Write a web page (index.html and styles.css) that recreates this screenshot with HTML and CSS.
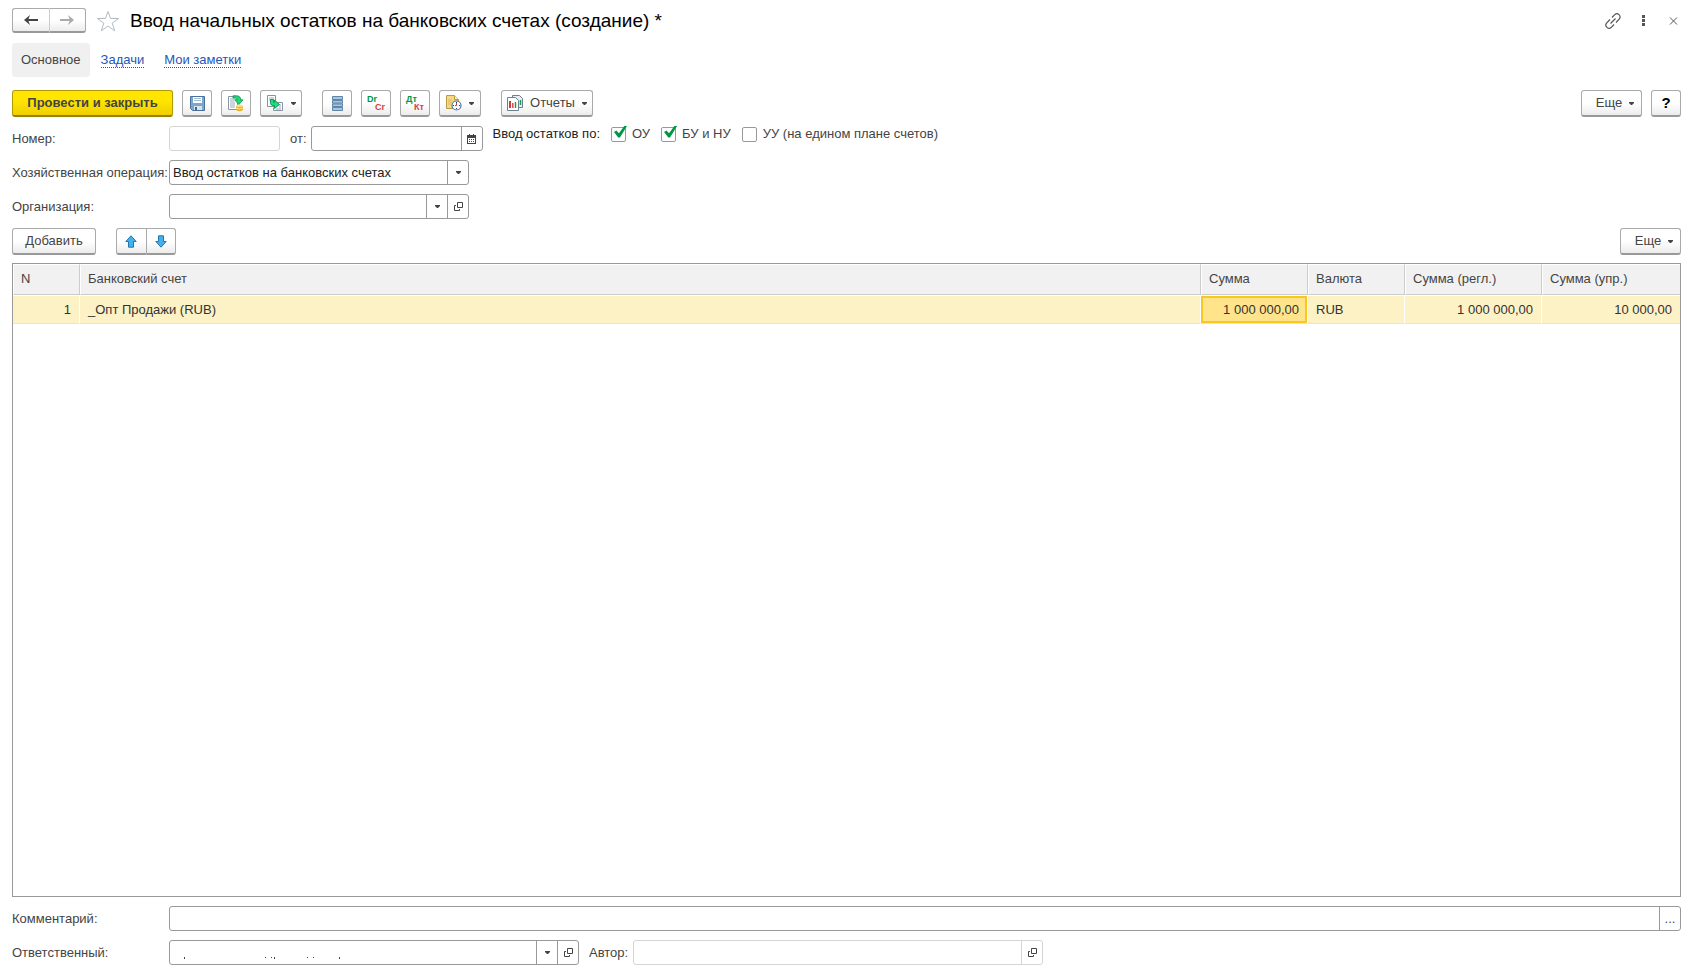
FILE: index.html
```html
<!DOCTYPE html>
<html lang="ru">
<head>
<meta charset="utf-8">
<title>Ввод начальных остатков на банковских счетах (создание) *</title>
<link rel="stylesheet" href="styles.css">
</head>
<body>
<svg class="defs" aria-hidden="true">
  <symbol id="open" viewBox="0 0 9 9"><path d="M3.5.5h5v5h-5zM2 3.500H.5v5h5V7" fill="none" stroke="#444"/></symbol>
  <symbol id="caret" viewBox="0 0 5 3"><path d="M0 0h5v1L3 3H2L0 1z" fill="#444"/></symbol>
</svg>
<div class="page">
  <header class="titlebar">
    <div class="group nav">
      <button class="btn" aria-label="Назад"><svg width="14" height="10" viewBox="0 0 14 10"><path d="M6 0L4.500 4H14v2H4.500L6 10 0 5z" fill="#444"/></svg></button>
      <button class="btn" aria-label="Вперед"><svg width="14" height="10" viewBox="0 0 14 10"><path d="M8 0l1.500 4H0v2h9.500L8 10l6-5z" fill="#aaa"/></svg></button>
    </div>
    <button class="plain star" aria-label="В избранное"><svg width="24" height="22" viewBox="0 0 24 22"><path d="M12 1.500l2.600 7h8l-6.400 4.600 2.500 7.700L12 16l-6.700 4.800 2.500-7.700L1.400 8.500h8z" fill="#fff" stroke="#b4bac2"/></svg></button>
    <h1>Ввод начальных остатков на банковских счетах (создание) *</h1>
    <div class="window-tools">
      <button class="plain" aria-label="Ссылка"><svg width="16" height="16" viewBox="0 0 16 16" fill="none" stroke="#555" stroke-width="1.200"><path d="M7 4.500l2.500-2.700a3 3 0 0 1 4.700 4.400L11 9.500M9 11.500l-2.500 2.700a3 3 0 0 1-4.700-4.400L5 6.500M5.500 10.500l5-5" /></svg></button>
      <button class="plain" aria-label="Меню"><svg width="16" height="11" viewBox="0 0 16 11" fill="#555"><path d="M7 0h3v3H7zM7 4h3v3H7zM7 8h3v3H7z"/></svg></button>
      <button class="plain" aria-label="Закрыть"><svg width="16" height="8" viewBox="0 0 16 8"><path d="M5 .5l7 7M12 .5l-7 7" stroke="#555"/></svg></button>
    </div>
  </header>

  <nav class="tabs">
    <a class="tab current" href="#main">Основное</a>
    <a class="tab" href="#tasks"><span>Задачи</span></a>
    <a class="tab" href="#notes"><span>Мои заметки</span></a>
  </nav>

  <div class="toolbar">
    <button class="btn primary">Провести и закрыть</button>
    <button class="btn icon" aria-label="Записать"><svg width="15" height="15" viewBox="0 0 15 15"><path d="M.5.5h14v14h-12l-2-2z" fill="#7ba6d0" stroke="#4a719b"/><path d="M3 1h9v6H3z" fill="#fff"/><path d="M4 2.500h7M4 4.500h7" stroke="#a9bfd4"/><path d="M4 10h8v4H4z" fill="#dde3e9"/><path d="M5 11h2v3H5z" fill="#3f668f"/></svg></button>
    <button class="btn icon" aria-label="Провести"><svg width="16" height="17" viewBox="0 0 16 17"><path d="M.5 1.500h9v13h-9z" fill="#fff" stroke="#8494a4"/><path d="M2 4h4M2 6h4M2 8h5M2 10h5M2 12h5" stroke="#9aa9b8"/><path d="M5 .8h3.500q4.200 0 4.200 4H15L11 9.500 6.500 4.800h2.700q0-1.700-1.700-1.700H5z" fill="#1fd976" stroke="#08904b" stroke-width=".8"/><path d="M8 11v4q3.500 2.500 7 0v-4z" fill="#e9ae22"/><ellipse cx="11.500" cy="11" rx="3.500" ry="1.200" fill="#ffdf6b"/><path d="M8 13q3.500 2 7 0" stroke="#ffe9a0" fill="none"/></svg></button>
    <button class="btn icon menu" aria-label="Создать на основании"><svg width="17" height="16" viewBox="0 0 17 16"><path d="M.5.500h8v11h-8zM9.500 7.500h6v8h-9v-3" fill="#fff" stroke="#8494a4"/><path d="M2 3h5M2 5h2M12 10h2M12 12h2M9 14h5" stroke="#9aa9b8"/><path d="M3.500 4.500v3.700q0 2.300 2.500 2.300h1.500v3L12.500 9.500 7.500 5v2.500H6.500V4.500z" fill="#22dd7c" stroke="#0a944f" stroke-width=".9"/></svg><svg class="caret"><use href="#caret"/></svg></button>
    <button class="btn icon gap" aria-label="Реестр"><svg width="11" height="15" viewBox="0 0 11 15"><rect width="11" height="15" rx="1" fill="#aecbe4"/><path d="M.5.500h10v3H.5zM.5 4.500h10v2.500H.5zM.5 8h10v2.500H.5zM.5 11.500h10v3H.5z" fill="#a6c6e2" stroke="#6286a6"/></svg></button>
    <button class="btn icon letters" aria-label="Dr Cr"><span class="debit">Dr</span><span class="credit">Cr</span></button>
    <button class="btn icon letters" aria-label="Дт Кт"><span class="debit">Дт</span><span class="credit">Кт</span></button>
    <button class="btn icon menu" aria-label="История"><svg width="16" height="16" viewBox="0 0 16 16"><path d="M.5.500h8l4 4v9H.5z" fill="#f6d980" stroke="#b99a45"/><path d="M8.500.500v4h4" fill="#fff3c6" stroke="#b99a45"/><path d="M2 5h4M2 7h4M2 9h3" stroke="#dcbc66"/><circle cx="10.500" cy="10.500" r="4.500" fill="#fff" stroke="#4775a8" stroke-width="1.200"/><path d="M10.500 7v1M10.500 13v1M7 10.500h1M13 10.500h1" stroke="#24466d"/><path d="M10.500 8v2.500H9" fill="none" stroke="#d13d3d"/></svg><svg class="caret"><use href="#caret"/></svg></button>
    <button class="btn reports gap"><svg width="16" height="16" viewBox="0 0 16 16"><path d="M5.500.500h7l3 3v9h-10z" fill="#e9edf1" stroke="#6f7f8f"/><path d="M.5 2.500h8l3 3v10H.5z" fill="#fff" stroke="#6f7f8f"/><path d="M3 6v7" stroke="#d33c32" stroke-width="2"/><path d="M5.800 8v5" stroke="#e0483c" stroke-width="1.500"/><path d="M8.500 7v6M13.500 5v5" stroke="#209c55" stroke-width="1.500"/></svg>Отчеты<svg class="caret"><use href="#caret"/></svg></button>
    <button class="btn more push">Еще<svg class="caret"><use href="#caret"/></svg></button>
    <button class="btn icon help" aria-label="Справка">?</button>
  </div>

  <form class="fields">
    <div class="row">
      <label class="label" for="number">Номер:</label>
      <div class="field readonly number"><input id="number" readonly></div>
      <label class="from" for="date">от:</label>
      <div class="field date"><input id="date"><button type="button" aria-label="Календарь"><svg width="9" height="10" viewBox="0 0 9 10"><path d="M0 1h9v9H0z" fill="#444"/><path d="M2.500 0v2M6.500 0v2" stroke="#444"/><path d="M1 4h7v5H1z" fill="#fff"/><path d="M2 5.500h5M2 7.500h5" stroke="#444" stroke-dasharray="1 1"/></svg></button></div>
      <div class="checks" role="group" aria-labelledby="checks-caption">
        <span id="checks-caption">Ввод остатков по:</span>
        <label><input type="checkbox" checked>ОУ</label>
        <label><input type="checkbox" checked>БУ и НУ</label>
        <label><input type="checkbox">УУ (на едином плане счетов)</label>
      </div>
    </div>
    <div class="row">
      <label class="label" for="operation">Хозяйственная операция:</label>
      <div class="field medium"><select id="operation"><option>Ввод остатков на банковских счетах</option></select><span class="arrow"><svg class="caret"><use href="#caret"/></svg></span></div>
    </div>
    <div class="row">
      <label class="label" for="org">Организация:</label>
      <div class="field medium"><input id="org"><button type="button" aria-label="Выбрать"><svg class="caret"><use href="#caret"/></svg></button><button type="button" aria-label="Открыть"><svg width="9" height="9"><use href="#open"/></svg></button></div>
    </div>
  </form>

  <div class="toolbar list-tools">
    <button class="btn add">Добавить</button>
    <div class="group move">
      <button class="btn" aria-label="Вверх"><svg width="12" height="13" viewBox="0 0 12 13"><path d="M6 .8l5.200 5.700H8.500v5.700h-5V6.500H.8z" fill="#41b1f0" stroke="#2677a8"/></svg></button>
      <button class="btn" aria-label="Вниз"><svg width="12" height="13" viewBox="0 0 12 13"><path d="M6 12.200L.8 6.500h2.700V.8h5v5.700h2.700z" fill="#41b1f0" stroke="#2677a8"/></svg></button>
    </div>
    <button class="btn more push">Еще<svg class="caret"><use href="#caret"/></svg></button>
  </div>

  <div class="grid">
    <table>
      <colgroup><col class="c-n"><col><col class="c-sum"><col class="c-cur"><col class="c-reg"><col class="c-man"></colgroup>
      <thead><tr><th>N</th><th>Банковский счет</th><th>Сумма</th><th>Валюта</th><th>Сумма (регл.)</th><th>Сумма (упр.)</th></tr></thead>
      <tbody><tr><td class="num">1</td><td>_Опт Продажи (RUB)</td><td class="num active">1 000 000,00</td><td>RUB</td><td class="num">1 000 000,00</td><td class="num">10 000,00</td></tr></tbody>
    </table>
  </div>

  <footer class="fields bottom">
    <div class="row">
      <label class="label" for="comment">Комментарий:</label>
      <div class="field wide"><input id="comment"><button type="button" aria-label="Редактировать">...</button></div>
    </div>
    <div class="row">
      <label class="label" for="responsible">Ответственный:</label>
      <div class="field responsible"><input id="responsible"><svg class="traces" width="160" height="3" viewBox="0 0 160 3" fill="#444"><path d="M0 0h1v2H0zM81 0h1v1h-1zM87 0h1v1h-1zM90 0h1v2h-1zM123 0h1v1h-1zM129 0h1v1h-1zM155 0h1v2h-1z"/></svg><button type="button" aria-label="Выбрать"><svg class="caret"><use href="#caret"/></svg></button><button type="button" aria-label="Открыть"><svg width="9" height="9"><use href="#open"/></svg></button></div>
      <label class="author-label" for="author">Автор:</label>
      <div class="field readonly author"><input id="author" readonly><button type="button" aria-label="Открыть"><svg width="9" height="9"><use href="#open"/></svg></button></div>
    </div>
  </footer>
</div>
</body>
</html>
```
FILE: styles.css
```css
* { box-sizing: border-box; }
body { margin: 0; background: #fff; }
body, button, input, select { font: 13px/16px "Liberation Sans", Arial, sans-serif; color: #444; }
svg { display: block; flex: none; }
.defs { position: absolute; width: 0; height: 0; }
.page { display: flex; flex-direction: column; min-height: 100vh; padding: 8px 12px 10px; }

.btn {
  display: flex; align-items: center; justify-content: center;
  height: 27px; padding: 0 12px; border: 1px solid #aaa; border-bottom: 2px solid #999; border-radius: 3px;
  background: linear-gradient(#fff 50%, #ececec);
}
.plain { display: flex; padding: 0; border: 0; background: none; }
.caret { width: 5px; height: 3px; }
.group { display: flex; }
.group .btn { flex: 1; padding: 0; }
.group .btn:first-child { border-radius: 3px 0 0 3px; }
.group .btn:last-child { border-left: 0; border-radius: 0 3px 3px 0; }

.titlebar { display: flex; align-items: center; height: 25px; }
.nav { width: 74px; }
.nav .btn { height: 25px; }
.nav .btn:first-child { border-right-color: #ccc; }
.star { margin: 0 10px 0 10px; }
h1 { margin: 0; font-size: 19px; line-height: 24px; font-weight: normal; color: #000; }
.window-tools { display: flex; align-items: center; gap: 14px; margin-left: auto; }

.tabs { display: flex; align-items: center; gap: 20px; margin-top: 10px; }
.tab { line-height: 34px; color: #2456b8; text-decoration: none; }
.tab span { display: block; line-height: 14px; border-bottom: 1px dotted #2456b8; }
.current { padding: 0 9px; margin-right: -9px; border-radius: 3px; background: #f0f0f0; color: #444; }

.toolbar { display: flex; gap: 9px; margin-top: 13px; }
.primary { width: 161px; border-color: #b09b00; border-bottom-color: #948200; background: linear-gradient(#ffe500 40%, #f0cf00); font-weight: bold; padding: 0; }
.icon { width: 30px; padding: 0; }
.menu { width: 42px; gap: 7px; }
.gap { margin-left: 11px; }
.letters { flex-direction: column; align-items: stretch; padding: 0 5px; font-size: 9px; line-height: 8px; font-weight: bold; }
.debit { color: #009646; text-align: left; }
.credit { color: #d9413b; text-align: right; }
.reports { width: 92px; gap: 7px; padding: 0; }
.more { width: 61px; gap: 7px; padding: 0 0 0 7px; }
.push { margin-left: auto; }
.help { font-size: 15px; color: #000; font-weight: bold; }

.fields { display: flex; flex-direction: column; gap: 9px; margin-top: 9px; }
.row { display: flex; align-items: center; }
.label { width: 157px; white-space: nowrap; }
.field { position: relative; display: flex; height: 25px; border: 1px solid #999; border-radius: 3px; background: #fff; }
.field input, .field select { flex: 1; min-width: 0; padding: 0 3px; border: 0; background: none; outline: 0; color: #222; }
.field select { appearance: none; }
.field button, .arrow { display: flex; align-items: center; justify-content: center; width: 21px; padding: 0; border: 0; border-left: 1px solid #999; background: none; }
.readonly, .readonly button { border-color: #d5d5d5; }
.number { width: 111px; }
.from { margin: 0 4px 0 10px; }
.date { width: 172px; }
.medium { width: 300px; }
.wide { flex: 1; }
.responsible { width: 410px; }
.author-label { margin: 0 5px 0 10px; }
.author { width: 410px; }
.traces { position: absolute; left: 14px; bottom: 4px; }

.checks { display: flex; align-self: flex-start; align-items: center; padding: 0 0 0 10px; color: #222; }
.checks label { display: flex; align-items: center; gap: 6px; margin-left: 11px; color: #444; }
.checks input { appearance: none; position: relative; width: 15px; height: 15px; margin: 0; border: 1px solid #999; border-radius: 2px; background: #fff; }
.checks input:checked::after { content: ""; position: absolute; left: 2px; top: -2px; width: 13px; height: 12px; background: #009646; clip-path: polygon(0 54%, 18% 42%, 38% 64%, 82% 0, 100% 4%, 46% 100%, 32% 100%); }

.list-tools { margin-top: 9px; gap: 20px; }
.add { width: 84px; padding: 0; }
.move { width: 60px; }

.grid { flex: 1; margin-top: 8px; border: 1px solid #999; }
table { width: 100%; border-collapse: separate; border-spacing: 0; table-layout: fixed; }
.c-n { width: 67px; }
.c-sum { width: 107px; }
.c-cur { width: 97px; }
.c-reg { width: 137px; }
.c-man { width: 138px; }
th { height: 31px; padding: 0 7px 1px; text-align: left; font-weight: normal; background: #f1f1f1; border: 1px solid #fff; border-right-color: #ccc; border-bottom: 1px solid #ccc; }
td { height: 29px; padding: 0 8px; color: #333; background: #fdf1c6; border-top: 1px solid #fff; border-right: 1px solid #fff; border-bottom: 1px solid #e5e5e5; }
th:last-child, td:last-child { border-right: 0; }
.num { text-align: right; }
.active { background: #ffe48c; box-shadow: inset 0 0 0 2px #f9c81e; }
```
